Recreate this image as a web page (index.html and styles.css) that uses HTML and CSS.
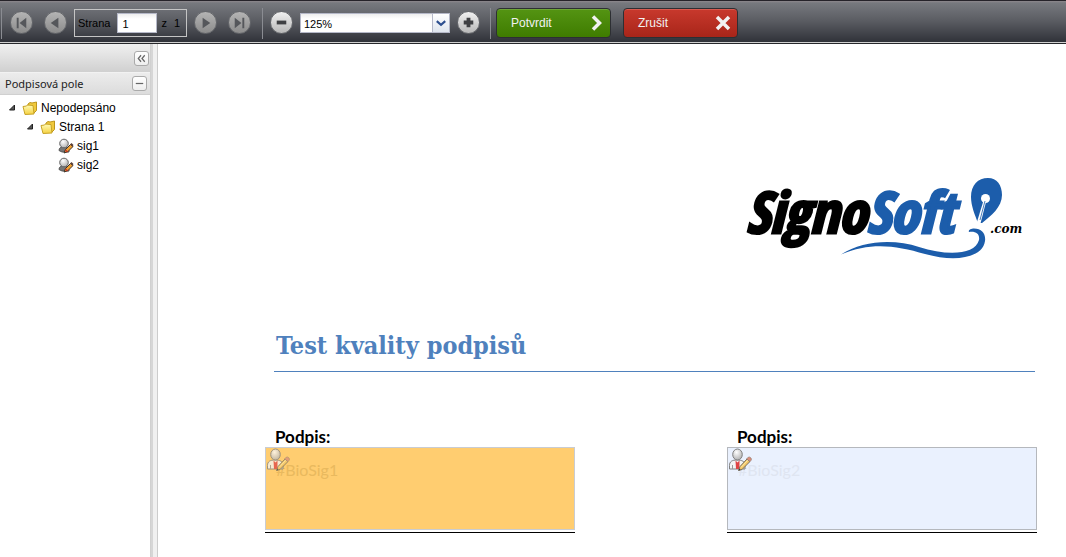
FILE: index.html
```html
<!DOCTYPE html>
<html lang="cs">
<head>
  <meta charset="UTF-8">
  <title>SignoSoft</title>
  <link rel="stylesheet" href="styles.css">
</head>
<body>

<svg class="defs" width="0" height="0" aria-hidden="true">
  <defs>
    <linearGradient id="folderFill" x1="0" y1="0" x2="0" y2="1">
      <stop offset="0" stop-color="#fffbb8"/>
      <stop offset="1" stop-color="#f5d140"/>
    </linearGradient>
    <radialGradient id="headFill" cx="0.4" cy="0.3" r="0.8">
      <stop offset="0" stop-color="#ffffff"/>
      <stop offset="1" stop-color="#a8a8a8"/>
    </radialGradient>
  </defs>
  <symbol id="folder" viewBox="0 0 16 16">
    <path d="M6 4 L8 2.500 L10 3 L14.500 2 V10.500 L11.500 13.500 H5 Z" fill="#f0c93c" stroke="#bd961c"/>
    <path d="M1 6.500 L4.500 6 L5.500 5 L11 5.500 L12 14 L3 14.500 Z" fill="url(#folderFill)" stroke="#c8a428"/>
  </symbol>
  <symbol id="signer" viewBox="0 0 24 24">
    <path d="M1.500 21 V17.500 C1.500 13.500 4 12 9 12 C14 12 17 13.500 17 17 V21 Z" fill="#f4f4f4" stroke="#808080"/>
    <path d="M7.500 12.500 L9.500 14.500 L11.500 12.500 L11.500 21 H8 Z" fill="#e04444"/>
    <path d="M4.500 17 V21 M14 17 V21" stroke="#999"/>
    <ellipse cx="9.500" cy="6.500" rx="4.800" ry="5.500" fill="url(#headFill)" stroke="#808080"/>
    <path d="M10.500 22.500 L12 18.500 L19 11 L22 13.500 L14 21.500 Z" fill="#f3c565" stroke="#77705f"/>
    <path d="M13 19.500 L20 12" stroke="#fff0b0"/>
    <path d="M18.500 11 L20.500 9 Q21.500 8.500 23 10 Q24 11 23 12.500 L22 13.500 Z" fill="#dc8d7a" stroke="#8a7a70" stroke-width="0.600"/>
    <path d="M10.500 22.500 L11.500 20.500 L12.500 22 Z" fill="#333"/>
  </symbol>
  <symbol id="signer-small" viewBox="0 0 16 16">
    <path d="M1 12.500 C1 10 3 8.500 6 8.500 C10 8.500 11 10 11 14 H4 Z" fill="#777" stroke="#555"/>
    <circle cx="6" cy="5.500" r="4.300" fill="url(#headFill)" stroke="#666"/>
    <path d="M6 15 L7.500 11.500 L12.500 6.500 L15 8.500 L10 13.500 Z" fill="#f0a030" stroke="#3c3028"/>
    <path d="M12 6.500 L13.500 5 L15.500 7 L14.500 8.500 Z" fill="#5b4038"/>
    <path d="M7.500 12 L9.500 14" stroke="#cc3322" stroke-width="1.500"/>
  </symbol>
</svg>

<header class="toolbar">
  <div class="group nav-group">
    <button class="round" type="button" aria-label="První strana"><svg viewBox="0 0 22 22"><path d="M6 6H8V17H6ZM16 6V17L9 11.500Z"/></svg></button>
    <button class="round" type="button" aria-label="Předchozí strana"><svg viewBox="0 0 22 22"><path d="M14 6V17L6 11.500Z"/></svg></button>
    <div class="page-box">
      <label for="page">Strana</label>
      <input id="page" type="text" value="1">
      <span>z</span>
      <span>1</span>
    </div>
    <button class="round" type="button" aria-label="Další strana"><svg viewBox="0 0 22 22"><path d="M8 6V17L16 11.500Z"/></svg></button>
    <button class="round" type="button" aria-label="Poslední strana"><svg viewBox="0 0 22 22"><path d="M6 6V17L13 11.500ZM14 6H16V17H14Z"/></svg></button>
  </div>
  <div class="group zoom-group">
    <button class="round light" type="button" aria-label="Zmenšit"><svg viewBox="0 0 22 22"><path d="M6 9H16V13H6Z"/></svg></button>
    <div class="zoom-select">
      <select aria-label="Přiblížení">
        <option>100%</option>
        <option selected>125%</option>
        <option>150%</option>
      </select>
      <svg class="arrow" viewBox="0 0 17 18"><path d="M4 7L8.500 11L13 7" fill="none" stroke="#2d4f8f" stroke-width="2.200"/></svg>
    </div>
    <button class="round light" type="button" aria-label="Zvětšit"><svg viewBox="0 0 22 22"><path d="M9 6H13V9H16V13H13V16H9V13H6V9H9Z"/></svg></button>
  </div>
  <div class="group action-group">
    <button class="action confirm" type="button">Potvrdit
      <svg viewBox="0 0 16 16"><path d="M5 1.500L11.500 8L5 14.500"/></svg>
    </button>
    <button class="action cancel" type="button">Zrušit
      <svg viewBox="0 0 16 16"><path d="M2 2L14 14M14 2L2 14"/></svg>
    </button>
  </div>
</header>

<div class="main">
  <aside class="sidebar">
    <div class="sidebar-top">
      <button class="tool" type="button" aria-label="Sbalit panel"><svg viewBox="0 0 14 14"><path d="M6.500 3.500L3.500 7L6.500 10.500M10.500 3.500L7.500 7L10.500 10.500"/></svg></button>
    </div>
    <div class="panel-title">
      <h2>Podpisová pole</h2>
      <button class="tool" type="button" aria-label="Sbalit"><svg viewBox="0 0 14 14"><path d="M3 7H11"/></svg></button>
    </div>
    <ul class="tree">
      <li>
        <div class="node"><svg class="caret" viewBox="0 0 8 8"><path d="M6.500 1V6H1.500Z"/></svg><svg class="icon"><use href="#folder"/></svg>Nepodepsáno</div>
        <ul>
          <li>
            <div class="node"><svg class="caret" viewBox="0 0 8 8"><path d="M6.500 1V6H1.500Z"/></svg><svg class="icon"><use href="#folder"/></svg>Strana 1</div>
            <ul>
              <li class="node leaf"><svg class="icon"><use href="#signer-small"/></svg>sig1</li>
              <li class="node leaf"><svg class="icon"><use href="#signer-small"/></svg>sig2</li>
            </ul>
          </li>
        </ul>
      </li>
    </ul>
  </aside>
  <div class="splitter"></div>

  <main class="document">
    <svg class="logo" viewBox="0 0 300 100" role="img" aria-label="SignoSoft.com">
      <text class="logo-name" x="11" y="63">Signo<tspan class="logo-blue">Soft</tspan></text>
      <path class="logo-blue" d="M243 53C240 45 236 36 236 27C236 15 243 8 253 8C262 8 267 15 267 25C267 37 256 46 247 53Z"/>
      <path d="M249 29L241.500 53.500H245.500L251.500 30Z" fill="#fff"/>
      <circle cx="250.500" cy="28.500" r="4.500" fill="#fff"/>
      <path d="M250 31L245 50" stroke="#1c5dab" stroke-width="0.800"/>
      <path class="logo-blue" d="M106 84.500C128 70 160 69 184 77C212 86 240 85 244 70C245 64 241 61 234 62C233 60 236 58.500 239 58.500C247 58.500 251 64 250 71C248 87 222 93 190 84C160 75 135 72 106 84.500Z"/>
      <text class="logo-com" x="255" y="63">.com</text>
    </svg>

    <h1>Test kvality podpisů</h1>

    <div class="signatures">
      <section class="signature">
        <h3>Podpis:</h3>
        <div class="field active">
          <svg class="signer"><use href="#signer"/></svg>
          <span>#BioSig1</span>
        </div>
      </section>
      <section class="signature">
        <h3>Podpis:</h3>
        <div class="field">
          <svg class="signer"><use href="#signer"/></svg>
          <span>#BioSig2</span>
        </div>
      </section>
    </div>
  </main>
</div>

</body>
</html>
```

FILE: styles.css
```css
* {
  box-sizing: border-box;
}

body {
  margin: 0;
  min-height: 100vh;
  display: flex;
  flex-direction: column;
  font-family: "Liberation Sans", Arial, sans-serif;
  font-size: 12px;
  color: #000;
  background: #fff;
}

button {
  padding: 0;
  cursor: pointer;
  font-family: inherit;
}

.defs {
  position: absolute;
}

/* toolbar */
.toolbar {
  display: flex;
  height: 44px;
  border-top: 1px solid #262329;
  border-bottom: 1px solid #26272b;
  background: linear-gradient(#8d888c 0, #77797e 2px, #5a5c62 20px, #303239 41px, #d0d0d0 41px);
}

.group {
  display: flex;
  align-items: center;
  height: 43px;
  background: linear-gradient(#8a8c92, #8a8c92) no-repeat 1px 7px / 1px 31px;
}

.nav-group {
  width: 261px;
  padding-left: 10px;
  gap: 11px;
}

.nav-group .page-box {
  margin: 0 -4px;
}

.zoom-group {
  width: 228px;
  padding-left: 9px;
  gap: 7px;
}

.action-group {
  padding-left: 7px;
  gap: 12px;
}

.round {
  width: 23px;
  height: 23px;
  border: 1px solid #66686c;
  border-radius: 50%;
  background: linear-gradient(#b4b4b4, #8c8c8c);
}

.round svg {
  display: block;
  width: 21px;
  height: 21px;
  fill: #55575b;
}

.round.light {
  background: linear-gradient(#f0f0f0, #b8b8b8);
}

.round.light svg {
  fill: #3f4043;
}

.page-box {
  display: flex;
  align-items: center;
  width: 113px;
  height: 28px;
  padding-left: 3px;
  border: 1px solid #c4c4c4;
  font-size: 11px;
}

.page-box input {
  width: 40px;
  height: 20px;
  margin: 0 4px 0 7px;
  padding: 2px 4px 0;
  border: 1px solid #b5b8c8;
  background: linear-gradient(#eee, #fff 5px);
  font: 11px "Liberation Sans", Arial, sans-serif;
}

.page-box span + span {
  margin-left: 7px;
}

.zoom-select {
  position: relative;
  width: 150px;
  height: 20px;
}

.zoom-select select {
  width: 100%;
  height: 20px;
  padding: 2px 3px 0;
  border: 1px solid #b5b8c8;
  border-radius: 0;
  appearance: none;
  color: #000;
  background: linear-gradient(#eee, #fff 5px);
  font: 11px "Liberation Sans", Arial, sans-serif;
}

.zoom-select .arrow {
  position: absolute;
  top: 1px;
  right: 1px;
  width: 17px;
  height: 18px;
  border-left: 1px solid #b5b8c8;
  background: linear-gradient(#fff, #dfe5ee);
  pointer-events: none;
}

.action {
  display: flex;
  align-items: center;
  justify-content: space-between;
  width: 115px;
  height: 30px;
  padding: 0 6px 0 14px;
  border: 1px solid #2d2f33;
  border-radius: 4px;
  font-size: 12px;
  color: #f2f2f2;
}

.action svg {
  width: 16px;
  height: 16px;
  fill: none;
  stroke: #f2f2f2;
  stroke-width: 3.5;
}

.confirm {
  background: linear-gradient(#549413, #3f7c00);
  box-shadow: inset 0 1px #6da436;
}

.cancel {
  background: linear-gradient(#c8392d, #a82519);
  box-shadow: inset 0 1px #d65a50;
}

/* left panel */
.main {
  display: flex;
  flex: 1;
}

.sidebar {
  width: 151px;
  border-right: 1px solid #d0d0d0;
}

.sidebar-top {
  display: flex;
  align-items: center;
  justify-content: flex-end;
  height: 28px;
  padding-right: 1px;
  background: linear-gradient(#f0f0f0, #d0d0d0);
}

.panel-title {
  display: flex;
  align-items: center;
  justify-content: space-between;
  height: 23px;
  padding: 0 3px 0 5px;
  border-top: 1px solid #f2f2f2;
  border-bottom: 1px solid #d0d0d0;
  background: linear-gradient(#ececec, #dcdcdc);
}

.panel-title h2 {
  margin: 0;
  font: 11px "Noto Sans", "Open Sans", sans-serif;
  font-stretch: normal;
  color: #222;
}

.tool {
  width: 15px;
  height: 15px;
  border: 1px solid #aaa;
  border-radius: 3px;
  background: linear-gradient(#fff, #eee);
}

.tool svg {
  display: block;
  width: 13px;
  height: 13px;
  fill: none;
  stroke: #666;
  stroke-width: 1.3;
}

.tree,
.tree ul {
  margin: 0;
  padding: 0;
  list-style: none;
}

.tree {
  padding: 3px 0 0 8px;
}

.tree ul {
  padding-left: 18px;
}

.node {
  display: flex;
  align-items: center;
  height: 19px;
}

.caret {
  width: 8px;
  height: 8px;
  margin-right: 6px;
  fill: #555;
  stroke: #222;
}

.icon {
  width: 16px;
  height: 16px;
  margin-right: 3px;
}

.leaf {
  padding-left: 14px;
}

.splitter {
  width: 7px;
  border-right: 1px solid #ccc;
  background: linear-gradient(90deg, #d6d6d6 2px, #f0f0f0 2px);
}

/* signed page */
.document {
  flex: 1;
  padding: 126px 29px 24px 107px;
}

.logo {
  display: block;
  width: 300px;
  height: 100px;
  margin: 0 2px 0 auto;
}

.logo-name {
  font: italic bold 57px "Liberation Sans Narrow", "Open Sans Condensed", "Liberation Sans", sans-serif;
  stroke: #000;
  stroke-width: 3;
}

.logo-blue {
  fill: #1c5dab;
}

tspan.logo-blue {
  stroke: #1c5dab;
}

.logo-com {
  font: italic bold 12px "DejaVu Serif", serif;
}

h1 {
  margin: 60px 2px 0 9px;
  padding: 0 0 9px 2px;
  border-bottom: 1px solid #4f81bd;
  font: bold 25px/32px "DejaVu Serif Condensed", "DejaVu Serif", serif;
  color: #4f81bd;
}

.signatures {
  display: grid;
  grid-template-columns: 1fr 1fr;
  gap: 152px;
  margin-top: 55px;
}

.signature {
  padding-bottom: 2px;
  border-bottom: 1px solid #000;
}

.signature h3 {
  margin: 0;
  padding-left: 10px;
  font: bold 17px/20px Lato, sans-serif;
}

.field {
  position: relative;
  height: 83px;
  padding: 12px 0 0 10px;
  border: 1px solid #b5b8bd;
  background: #eaf1fe;
  font: 16px/20px Lato, sans-serif;
  color: #dfe5f1;
}

.field.active {
  border-color: #c9ccd2;
  background: #ffcd70;
  color: #e9b95e;
}

.signer {
  position: absolute;
  top: 0;
  left: 0;
  width: 24px;
  height: 24px;
}

.active .signer {
  opacity: 0.75;
}
```
